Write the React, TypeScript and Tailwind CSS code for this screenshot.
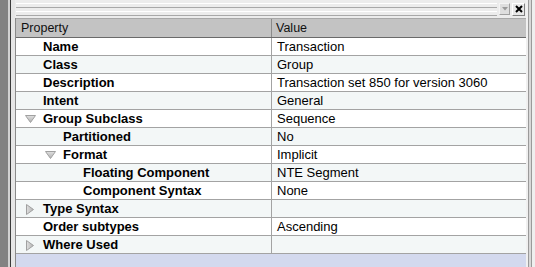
import React from "react";

type Row = { label: string; value: string; level: number; expander?: "down" | "right" };

const rows: Row[] = [
  { label: "Name", value: "Transaction", level: 0 },
  { label: "Class", value: "Group", level: 0 },
  { label: "Description", value: "Transaction set 850 for version 3060", level: 0 },
  { label: "Intent", value: "General", level: 0 },
  { label: "Group Subclass", value: "Sequence", level: 0, expander: "down" },
  { label: "Partitioned", value: "No", level: 1 },
  { label: "Format", value: "Implicit", level: 1, expander: "down" },
  { label: "Floating Component", value: "NTE Segment", level: 2 },
  { label: "Component Syntax", value: "None", level: 2 },
  { label: "Type Syntax", value: "", level: 0, expander: "right" },
  { label: "Order subtypes", value: "Ascending", level: 0 },
  { label: "Where Used", value: "", level: 0, expander: "right" },
];

function Expander({ dir }: { dir: "down" | "right" }) {
  return dir === "down" ? (
    <svg width="11" height="8" viewBox="0 0 11 8" className="shrink-0">
      <defs>
        <linearGradient id="gd" x1="0" y1="0" x2="0" y2="1">
          <stop offset="0" stopColor="#e0e0e0" />
          <stop offset="1" stopColor="#b0b0b0" />
        </linearGradient>
      </defs>
      <path d="M0.5 0.5 L10.5 0.5 L5.5 7.5 Z" fill="url(#gd)" stroke="#a0a0a0" strokeWidth="1" />
    </svg>
  ) : (
    <svg width="8" height="11" viewBox="0 0 8 11" className="shrink-0">
      <defs>
        <linearGradient id="gr" x1="0" y1="0" x2="1" y2="0">
          <stop offset="0" stopColor="#e0e0e0" />
          <stop offset="1" stopColor="#b0b0b0" />
        </linearGradient>
      </defs>
      <path d="M0.5 0.5 L7.5 5.5 L0.5 10.5 Z" fill="url(#gr)" stroke="#a0a0a0" strokeWidth="1" />
    </svg>
  );
}

export default function App() {
  const font = { fontFamily: '"Liberation Sans", Arial, sans-serif' };
  return (
    <div className="flex w-[535px] h-[267px] overflow-hidden bg-[#e4e4e4]" style={font}>
      {/* left frame */}
      <div className="w-[8px] bg-[#828282]" />
      <div className="w-[2px] bg-[#d2d2d2]" />
      <div className="w-[1px] bg-[#3a3a3a]" />
      <div className="w-[4px] bg-[#e6e6e6]" />
      {/* main */}
      <div className="flex flex-col w-[511px]">
        {/* title bar */}
        <div className="h-[18px] flex items-center bg-[#ececec]">
          <div className="flex-1 flex flex-col gap-[3px] pl-[1px] pr-[2px]">
            <div className="h-[1px] bg-[#ffffff]" />
            <div className="h-[1px] bg-[#a8a8a8]" />
            <div className="h-[1px] bg-[#ffffff]" />
            <div className="h-[1px] bg-[#a8a8a8]" />
          </div>
          <div className="w-[11px] h-[12px] flex items-center justify-center bg-[#dedede] border border-[#f4f4f4] border-r-[#a0a0a0] border-b-[#a0a0a0] mr-[2px]">
            <svg width="6" height="4" viewBox="0 0 6 4">
              <path d="M0 0 L6 0 L3 3.5 Z" fill="#9a9a9a" />
            </svg>
          </div>
          <div className="w-[13px] h-[13px] flex items-center justify-center bg-[#e8e8e8] border border-[#ffffff] border-r-[#808080] border-b-[#808080] mr-[1px]">
            <svg width="8" height="8" viewBox="0 0 8 8">
              <path d="M1 1 L7 7 M7 1 L1 7" stroke="#000" strokeWidth="2" />
            </svg>
          </div>
        </div>
        {/* grid */}
        <div className="flex-1 flex flex-col border-l border-[#8a8a8a] bg-[#d3d9ee]">
          <div className="flex h-[20px] bg-[#c3c3c3] border-t border-[#a8a8a8] border-b border-b-[#6a6a6a] text-[12.5px] text-[#111]">
            <div className="w-[256px] pl-[5px] flex items-center border-r border-[#8a8a8a]">Property</div>
            <div className="flex-1 pl-[4px] flex items-center">Value</div>
          </div>
          {rows.map((r, i) => (
            <div
              key={r.label}
              className={`flex h-[18px] border-b border-[#a3a3a3] text-[13px] text-black ${
                i % 2 === 0 ? "bg-white" : "bg-[#f3f7f7]"
              }`}
            >
              <div className="w-[256px] flex items-center border-r border-[#a3a3a3] font-bold">
                <div className="flex items-center pt-[1px]" style={{ paddingLeft: r.level * 20 }}>
                  <div className="w-[27px] flex items-center justify-end pr-[7px]">
                    {r.expander === "down" && <Expander dir="down" />}
                    {r.expander === "right" && <div className="pr-[2px] flex"><Expander dir="right" /></div>}
                  </div>
                  <span>{r.label}</span>
                </div>
              </div>
              <div className="flex-1 flex items-center pl-[5px] pt-[1px]">{r.value}</div>
            </div>
          ))}
        </div>
      </div>
      {/* right frame */}
      <div className="w-[2px] bg-[#f0f0f0]" />
      <div className="w-[1px] bg-[#9a9a9a]" />
      <div className="w-[2px] bg-[#d8d8d8]" />
      <div className="w-[1px] bg-[#9a9a9a]" />
      <div className="flex-1 bg-[#efefef]" />
    </div>
  );
}
